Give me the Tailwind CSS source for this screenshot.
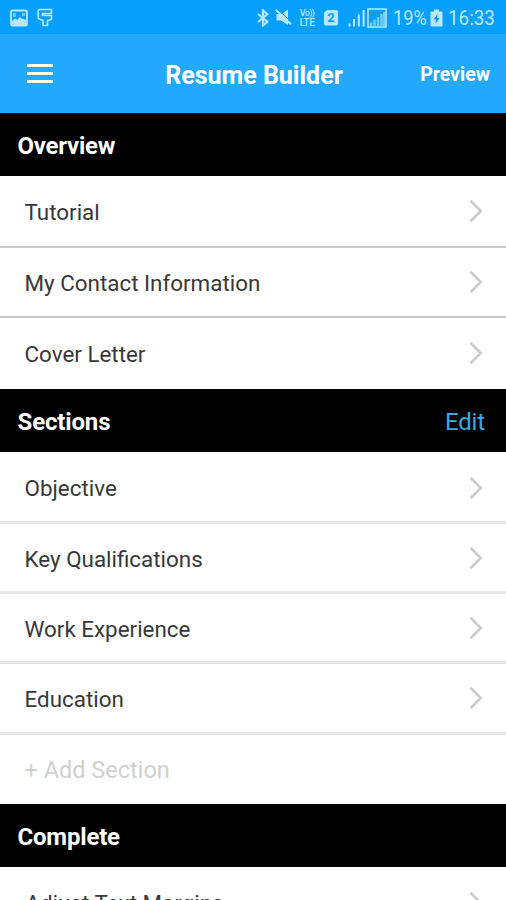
<!DOCTYPE html>
<html lang="en">
<head>
<meta charset="utf-8">
<title>Resume Builder</title>
<script src="https://cdn.jsdelivr.net/npm/@tailwindcss/browser@4"></script>
</head>
<body class="w-[506px] h-[900px] overflow-hidden bg-white font-['Roboto',sans-serif] text-[22px] leading-none text-[#383838]">
<svg class="hidden"><symbol id="chev" viewBox="0 0 16 24"><path d="M2.500 1.800 12.800 12 2.500 22.200" fill="none" stroke="#cccccc" stroke-width="2.700"/></symbol></svg>
<div class="h-[900px] flex flex-col overflow-hidden">
  <div class="h-[34px] shrink-0 bg-[#069ffb] flex items-center justify-between pl-[10px] pr-[11px] pt-[1px] text-[#b9e8fd]">
    <div class="flex items-center gap-[9px]">
      <svg width="18" height="18" viewBox="0 0 18 18"><rect x="1" y="1.500" width="16" height="15" rx="1.200" fill="none" stroke="currentColor" stroke-width="1.800"/><path d="M2 12 5 9.500 7.500 11 9.500 8 12 9.500 16 11V16H2z" fill="currentColor"/><path d="M3 4h3v4H3zM12 4h3v3h-3z" fill="currentColor" fill-opacity=".6"/></svg>
      <svg width="16" height="20" viewBox="0 0 16 20"><path d="M2.200 1.500H14.500V5.500H5.500V7.500H14.500V11.500L10.500 12.500V17.500H6V12.500L1.200 10.500V2.500Z" fill="none" stroke="currentColor" stroke-width="1.700" stroke-linejoin="round"/></svg>
    </div>
    <div class="flex items-center">
      <svg width="12" height="18" viewBox="0 0 12 18"><path d="M1 5 10.300 12.700 6 16.500V1.500L10.300 5.300 1 13" fill="none" stroke="currentColor" stroke-width="2.200"/></svg>
      <svg class="ml-[6px]" width="17" height="17" viewBox="0 0 17 17"><path d="M1.500 5H6.500L13 0.500V16L6 11.500H1.500Z" fill="currentColor"/><path d="M2.300 -.2 17 13.800" stroke="#069ffb" stroke-width="1"/><path d="M.8 .8 16 15.300" stroke="currentColor" stroke-width="1.900"/></svg>
      <div class="ml-[6px] w-[18px] flex flex-col items-center text-[10.500px] leading-[10px] font-medium"><span class="text-[9px] tracking-[-0.600px]">Vo))</span><span class="tracking-[-0.500px]">LTE</span></div>
      <div class="ml-[8px] w-[14px] h-[16px] rounded-[2px] bg-[#b9e8fd] text-[#069ffb] text-[13px] leading-[16px] font-bold text-center [clip-path:polygon(25%_0,100%_0,100%_100%,0_100%,0_20%)]">2</div>
      <svg class="ml-[10px]" width="18" height="18" viewBox="0 0 18 18"><path d="M1.500 14.500v3M6 10v7.500M10.800 5.500v12M15.600 1v16.500" stroke="currentColor" stroke-width="2"/></svg>
      <svg class="ml-[1px]" width="20" height="20" viewBox="0 0 20 20"><rect x="1" y="1" width="18" height="18" fill="none" stroke="currentColor" stroke-width="1.500"/><path d="M4 14.500v3.500M7.500 11.500V18M11 9v9M14.500 6v12M17.300 4v14" stroke="currentColor" stroke-opacity=".65" stroke-width="2.400"/></svg>
      <span class="ml-[6px] w-[34px] pt-px text-[20px] whitespace-nowrap"><span class="inline-block origin-left scale-x-[.91]">19%</span></span>
      <svg class="ml-[3px]" width="13" height="18" viewBox="0 0 13 18"><path d="M4 0.500h5v2h2.500q1 0 1 1v13q0 1-1 1h-10q-1 0-1-1v-13q0-1 1-1H4z" fill="currentColor"/><path d="M7.500 5 3.500 10.500H6L5.500 15 9.500 9H7z" fill="#069ffb"/></svg>
      <span class="ml-[5px] w-[47px] pt-px text-[20px] whitespace-nowrap"><span class="inline-block origin-left scale-x-[.94]">16:33</span></span>
    </div>
  </div>
  <div class="h-[79px] shrink-0 bg-[#23a9fb] grid grid-cols-[164px_180px_1fr] items-center text-white font-bold">
    <div class="ml-[27px] w-[26px] flex flex-col gap-[5px]"><i class="h-[3px] bg-white"></i><i class="h-[3px] bg-white"></i><i class="h-[3px] bg-white"></i></div>
    <div class="pt-[3px] text-[25px] text-center whitespace-nowrap"><span>Resume Builder</span></div>
    <div class="pt-[2px] text-[19.500px] text-right pr-[16px]">Preview</div>
  </div>
  <div class="h-[63px] shrink-0 bg-black flex items-center px-[17.500px] pt-[2px] text-white font-bold text-[24px] tracking-[-0.250px]"><span>Overview</span></div>
  <div class="h-[72px] shrink-0 border-b-2 border-[#c9c9c9] flex items-center justify-between pl-[24.500px] pr-[22px] text-[22.400px]"><span class="pt-[3px]">Tutorial</span><svg width="16" height="24"><use href="#chev"/></svg></div>
  <div class="h-[70px] shrink-0 border-b-2 border-[#c9c9c9] flex items-center justify-between pl-[24.500px] pr-[22px] text-[22.400px]"><span class="pt-[3px]">My Contact Information</span><svg width="16" height="24"><use href="#chev"/></svg></div>
  <div class="h-[71px] shrink-0 flex items-center justify-between pl-[24.500px] pr-[22px] text-[22.400px]"><span class="pt-[2px]">Cover Letter</span><svg class="mt-[-1px]" width="16" height="24"><use href="#chev"/></svg></div>
  <div class="h-[63px] shrink-0 bg-black flex items-center justify-between pl-[17.500px] pr-[21px] pt-[2px] text-white font-bold text-[24px] tracking-[-0.150px]"><span>Sections</span><span class="text-[#38a9e8] font-normal">Edit</span></div>
  <div class="h-[72px] shrink-0 border-b-3 border-[#e6e6e6] flex items-center justify-between pl-[24.500px] pr-[22px] pt-[2px] text-[22.400px]"><span class="pt-[1px]">Objective</span><svg width="16" height="24"><use href="#chev"/></svg></div>
  <div class="h-[70px] shrink-0 border-b-3 border-[#e6e6e6] flex items-center justify-between pl-[24.500px] pr-[22px] text-[22.400px]"><span class="pt-[3px]">Key Qualifications</span><svg width="16" height="24"><use href="#chev"/></svg></div>
  <div class="h-[70px] shrink-0 border-b-3 border-[#e6e6e6] flex items-center justify-between pl-[24.500px] pr-[22px] text-[22.400px]"><span class="pt-[3px]">Work Experience</span><svg width="16" height="24"><use href="#chev"/></svg></div>
  <div class="h-[71px] shrink-0 border-b-3 border-[#e6e6e6] flex items-center justify-between pl-[24.500px] pr-[22px] text-[22.400px]"><span class="pt-[3px]">Education</span><svg width="16" height="24"><use href="#chev"/></svg></div>
  <div class="h-[69px] shrink-0 flex items-center pl-[24.500px] text-[23.500px] text-[#d0d0d0]"><span class="pt-[2px]">+ Add Section</span></div>
  <div class="h-[63px] shrink-0 bg-black flex items-center px-[17.500px] pt-[2px] text-white font-bold text-[24px] tracking-[-0.200px]"><span>Complete</span></div>
  <div class="h-[72px] shrink-0 flex items-center justify-between pl-[25.500px] pr-[22px] text-[22.400px]"><span>Adjust Text Margins</span><svg width="16" height="24"><use href="#chev"/></svg></div>
</div>
</body>
</html>
